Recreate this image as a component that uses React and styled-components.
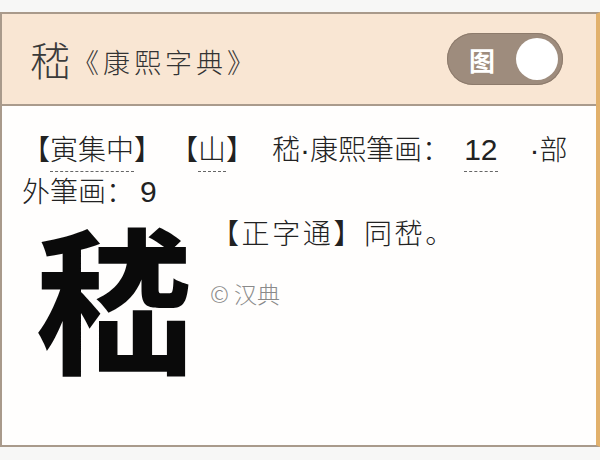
import React from "react";
import styled, { createGlobalStyle } from "styled-components";

const GlobalStyle = createGlobalStyle`
  html, body {
    margin: 0;
    padding: 0;
    background: #f7f7f6;
  }
  body {
    font-family: "Noto Sans CJK SC", "Noto Sans", sans-serif;
    color: #333;
  }
`;

const Card = styled.div`
  margin-top: 12px;
  height: 435px;
  box-sizing: border-box;
  border: 2px solid #a99a8b;
  border-right: 4px solid #e2b16c;
  background: #fffefd;
  display: flex;
  flex-direction: column;
`;

const Header = styled.div`
  height: 90px;
  background: #f9e6d3;
  border-bottom: 2px solid #aa9b8c;
  display: flex;
  align-items: center;
  padding: 0 33px 0 28px;
`;

const TitleChar = styled.span`
  font-size: 40px;
  line-height: 1;
  font-weight: 300;
  color: #3a3a3a;
`;

const BookName = styled.span`
  font-size: 27px;
  font-weight: 300;
  letter-spacing: 4px;
  color: #333;
  margin-left: 2px;
  margin-top: 4px;
  flex: 1;
`;

const Toggle = styled.div`
  width: 116px;
  height: 52px;
  border-radius: 26px;
  background: #9e8c7d;
  box-shadow: inset 0 0 0 1px #8d7b6c;
  display: flex;
  align-items: center;
  justify-content: space-between;
  padding: 0 5px 0 22px;
  box-sizing: border-box;
`;

const ToggleLabel = styled.span`
  color: #fff;
  font-size: 26px;
  font-weight: 700;
`;

const Knob = styled.span`
  width: 42px;
  height: 42px;
  border-radius: 50%;
  background: #fff;
`;

const Body = styled.div`
  padding: 22px 20px 0 20px;
`;

const Info = styled.p`
  margin: 0;
  font-size: 28px;
  font-weight: 300;
  line-height: 40px;
  color: #222;
`;

const Ref = styled.span`
  position: relative;
  &::after {
    content: "";
    position: absolute;
    left: 0;
    right: 0;
    bottom: -4px;
    border-bottom: 1px dashed #666;
  }
`;

const Num = styled.span`
  font-family: "Liberation Sans", Arial, sans-serif;
  font-size: 30px;
`;

const Gap = styled.span`
  display: inline-block;
  width: ${(p) => p.w}px;
`;

const Entry = styled.div`
  display: flex;
`;

const GlyphBox = styled.div`
  width: 188px;
  padding: 3px 0 0 13px;
  box-sizing: border-box;
`;

const BigChar = styled.div`
  font-size: 158px;
  line-height: 1;
  font-weight: 700;
  color: #0a0a0a;
`;

const Side = styled.div`
  display: flex;
  flex-direction: column;
`;

const Definition = styled.div`
  font-size: 28px;
  font-weight: 300;
  letter-spacing: 2.6px;
  line-height: 40px;
  color: #222;
  margin-left: 1px;
`;

const Copyright = styled.div`
  margin-top: 24px;
  font-size: 23px;
  font-weight: 300;
  color: #8a8a8a;
`;

export default function App() {
  return (
    <>
      <GlobalStyle />
      <Card>
        <Header>
          <TitleChar>嵇</TitleChar>
          <BookName>《康熙字典》</BookName>
          <Toggle>
            <ToggleLabel>图</ToggleLabel>
            <Knob />
          </Toggle>
        </Header>
        <Body>
          <Info>
            【<Ref>寅集中</Ref>】<Gap w={8} />【<Ref>山</Ref>】<Gap w={18} />嵇
            <Num>·</Num>康熙筆画：<Gap w={14} />
            <Ref>
              <Num>12</Num>
            </Ref>
            <Gap w={32} />
            <Num>·</Num>部外筆画：<Gap w={6} />
            <Num>9</Num>
          </Info>
          <Entry>
            <GlyphBox>
              <BigChar>嵇</BigChar>
            </GlyphBox>
            <Side>
              <Definition>【正字通】同嵆。</Definition>
              <Copyright>© 汉典</Copyright>
            </Side>
          </Entry>
        </Body>
      </Card>
    </>
  );
}
